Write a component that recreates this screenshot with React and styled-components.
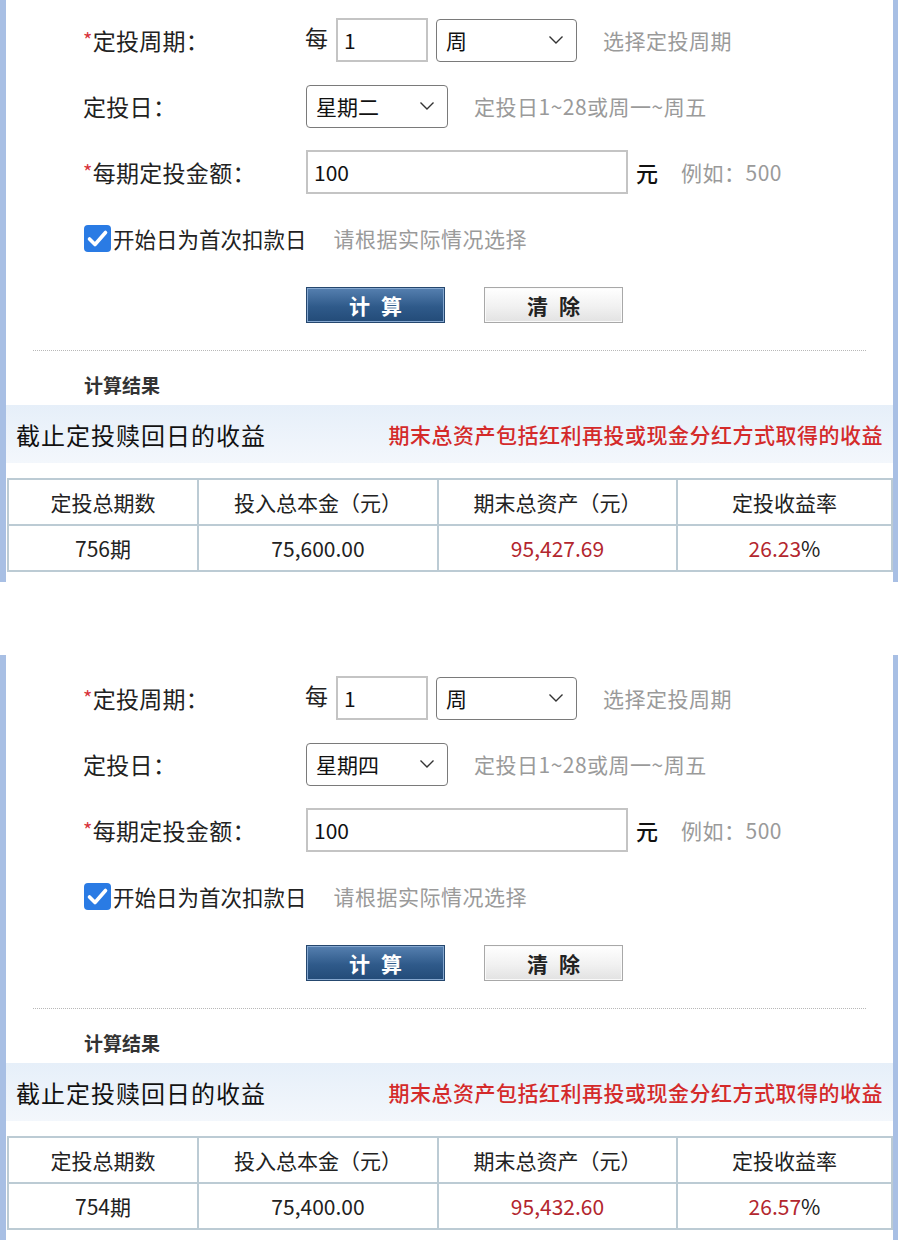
import React from 'react';
import styled, { createGlobalStyle } from 'styled-components';

const GlobalStyle = createGlobalStyle`
    body {
        margin: 0;
        background: #fff;
        font-family: "Noto Sans CJK SC", "Noto Sans", sans-serif;
        color: #222;
    }
`

const results = [
    { day: '星期二', periods: '756期', principal: '75,600.00', total: '95,427.69', rate: '26.23' },
    { day: '星期四', periods: '754期', principal: '75,400.00', total: '95,432.60', rate: '26.57' },
]

const Chevron = () => (
    <svg width="16" height="10" viewBox="0 0 16 10">
        <path d="M1.5 1.5 L8 8 L14.5 1.5" fill="none" stroke="#333" strokeWidth="1.4" />
    </svg>
)

const CheckMark = () => (
    <svg width="27" height="27" viewBox="0 0 27 27">
        <rect x="0" y="0" width="27" height="27" rx="4" fill="#2a7be4" />
        <path d="M5.5 14 L11 19.5 L21.5 7.5" fill="none" stroke="#fff" strokeWidth="3.6" strokeLinecap="round" strokeLinejoin="round" />
    </svg>
)

const Calculator = ({ data, first }) => {
    return (
        <Panel $first={first}>
            <Form>
                <Row>
                    <Label><Star>*</Star>定投周期：</Label>
                    <Controls>
                        <Every>每</Every>
                        <Input $width={92}>1</Input>
                        <Select $width={141}>周<Chevron /></Select>
                        <Hint $gap={26}>选择定投周期</Hint>
                    </Controls>
                </Row>
                <Row>
                    <Label>定投日：</Label>
                    <Controls>
                        <Select $width={142}>{data.day}<Chevron /></Select>
                        <Hint $gap={26}>定投日1~28或周一~周五</Hint>
                    </Controls>
                </Row>
                <Row>
                    <Label><Star>*</Star>每期定投金额：</Label>
                    <Controls>
                        <Input $width={322}>100</Input>
                        <Unit>元</Unit>
                        <Hint $gap={23}>例如：500</Hint>
                    </Controls>
                </Row>
                <CheckRow>
                    <CheckMark />
                    <CheckText>开始日为首次扣款日</CheckText>
                    <Hint $gap={27}>请根据实际情况选择</Hint>
                </CheckRow>
                <Buttons>
                    <Button $primary>计 算</Button>
                    <Button>清 除</Button>
                </Buttons>
            </Form>
            <Divider />
            <ResultTitle>计算结果</ResultTitle>
            <Band>
                <BandTitle>截止定投赎回日的收益</BandTitle>
                <BandNote>期末总资产包括红利再投或现金分红方式取得的收益</BandNote>
            </Band>
            <Table>
                <colgroup>
                    <col style={{ width: 190 }} />
                    <col style={{ width: 240 }} />
                    <col style={{ width: 239 }} />
                    <col />
                </colgroup>
                <thead>
                    <tr>
                        <Th>定投总期数</Th>
                        <Th>投入总本金（元）</Th>
                        <Th>期末总资产（元）</Th>
                        <Th>定投收益率</Th>
                    </tr>
                </thead>
                <tbody>
                    <tr>
                        <Td>{data.periods}</Td>
                        <Td>{data.principal}</Td>
                        <Td $red>{data.total}</Td>
                        <Td><Red>{data.rate}</Red>%</Td>
                    </tr>
                </tbody>
            </Table>
        </Panel>
    )
}

const App = () => {
    return (
        <Page>
            <GlobalStyle />
            {results.map((r, i) => (
                <Calculator key={i} data={r} first={i === 0} />
            ))}
        </Page>
    )
}

const Page = styled.div`
    display: flex;
    flex-direction: column;
    gap: 73px;
    width: 898px;
`

const Panel = styled.section`
    height: 585px;
    box-sizing: border-box;
    margin-top: ${p => p.$first ? '-3px' : '0'};
    border-left: 6px solid #a8bfe4;
    border-right: 5px solid #a8bfe4;
    display: flex;
    flex-direction: column;
`

const Form = styled.div`
    display: flex;
    flex-direction: column;
    gap: 22px;
    padding-top: 21px;
`

const Row = styled.div`
    display: grid;
    grid-template-columns: 223px 1fr;
    align-items: center;
    height: 44px;
    padding-left: 77px;
`

const Label = styled.div`
    font-size: 23px;
    color: #222;
    letter-spacing: 0.3px;
`

const Star = styled.span`
    color: #d8343c;
    font-size: 20px;
    vertical-align: 2px;
`

const Controls = styled.div`
    display: flex;
    align-items: center;
    height: 100%;
`

const Every = styled.span`
    font-size: 23px;
    width: 31px;
    margin-left: -1px;
    align-self: flex-start;
    line-height: 38px;
`

const Input = styled.div`
    width: ${p => p.$width}px;
    height: 44px;
    box-sizing: border-box;
    border: 2px solid #c4c4c4;
    padding-left: 6px;
    font-size: 21px;
    display: flex;
    align-items: center;
    color: #111;
`

const Select = styled.div`
    width: ${p => p.$width}px;
    height: 43px;
    box-sizing: border-box;
    margin-left: 8px;
    border: 1.5px solid #7a7a7a;
    border-radius: 4px;
    padding: 0 12px 0 9px;
    font-size: 21px;
    color: #111;
    display: flex;
    align-items: center;
    justify-content: space-between;
    &:first-child {
        margin-left: 0;
    }
`

const Hint = styled.span`
    margin-left: ${p => p.$gap}px;
    font-size: 21px;
    letter-spacing: 0.5px;
    color: #9a9a9a;
    white-space: nowrap;
`

const Unit = styled.span`
    margin-left: 8px;
    font-size: 22px;
    font-weight: 500;
    color: #111;
`

const CheckRow = styled.div`
    display: flex;
    align-items: center;
    height: 44px;
    padding-left: 78px;
`

const CheckText = styled.span`
    margin-left: 2px;
    font-size: 21.5px;
    color: #222;
`

const Buttons = styled.div`
    display: flex;
    gap: 39px;
    padding-left: 300px;
    margin-top: 5px;
`

const Button = styled.button`
    width: 139px;
    height: 36px;
    font-family: inherit;
    font-size: 21px;
    font-weight: 700;
    letter-spacing: 3px;
    text-indent: 3px;
    cursor: pointer;
    border: 1px solid ${p => p.$primary ? '#25476e' : '#a8a8a8'};
    color: ${p => p.$primary ? '#fff' : '#222'};
    background: ${p => p.$primary
        ? 'linear-gradient(#5680b0, #2f5a8a 55%, #234b78)'
        : 'linear-gradient(#ffffff, #f1f1f1 55%, #e2e2e2)'};
    box-shadow: inset 0 0 0 1px ${p => p.$primary ? '#86a8d0' : '#fafafa'};
    padding: 0;
`

const Divider = styled.div`
    margin: 27px 27px 0;
    border-top: 1px dotted #b8b8b8;
`

const ResultTitle = styled.div`
    margin: 18px 0 0 78px;
    font-size: 19px;
    font-weight: 700;
    color: #333;
    line-height: 32px;
`

const Band = styled.div`
    margin-top: 4px;
    height: 58px;
    display: flex;
    align-items: center;
    justify-content: space-between;
    padding: 0 10px;
    background: linear-gradient(#e6eff9, #f3f7fc);
`

const BandTitle = styled.div`
    font-size: 24px;
    color: #111;
    letter-spacing: 1px;
`

const BandNote = styled.div`
    font-size: 21px;
    font-weight: 500;
    color: #d42a2a;
    letter-spacing: 0.5px;
`

const Table = styled.table`
    margin-top: 15px;
    margin-left: 1px;
    width: calc(100% - 1px);
    border-collapse: collapse;
    table-layout: fixed;
`

const Th = styled.th`
    height: 44px;
    border: 2px solid #bccbd4;
    font-size: 21px;
    font-weight: 400;
    color: #222;
    padding: 0;
`

const Td = styled.td`
    height: 44px;
    border: 2px solid #bccbd4;
    text-align: center;
    font-size: 21px;
    color: ${p => p.$red ? '#b3262e' : '#222'};
    padding: 0;
`

const Red = styled.span`
    color: #b3262e;
`

export default App;
